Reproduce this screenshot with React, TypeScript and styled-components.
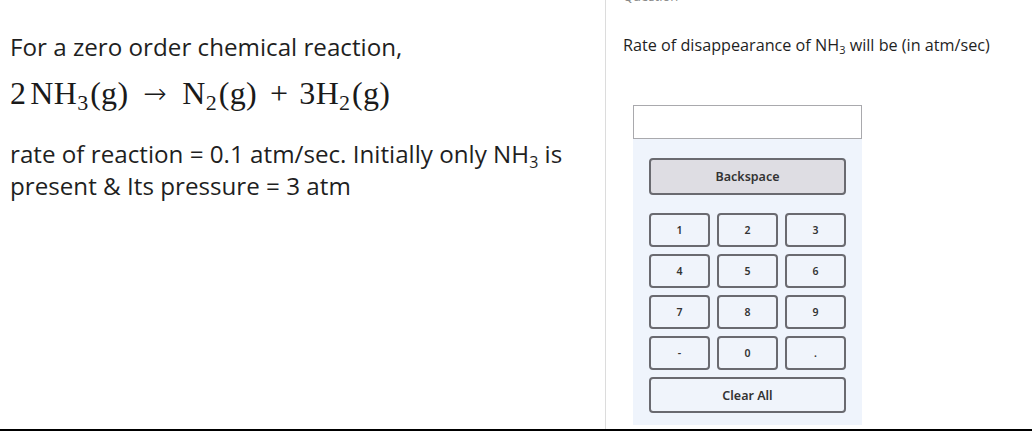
import React, { useState } from 'react';
import styled, { createGlobalStyle } from 'styled-components';

const keys = ['1', '2', '3', '4', '5', '6', '7', '8', '9', '-', '0', '.'];

const App = () => {
  const [value, setValue] = useState('');

  const press = (key: string) => setValue(old => old + key);

  return (
    <>
      <GlobalStyle />
      <Page>
        <LeftPane>
          <Para>For a zero order chemical reaction,</Para>
          <Equation>
            2<Gap w={4} />NH<sub>3</sub><Gap w={2} />(g)<Gap w={15} />
            <Arrow>→</Arrow>
            <Gap w={15} />N<sub>2</sub><Gap w={2} />(g)<Gap w={13} />+<Gap w={11} />3H<sub>2</sub>
            <Gap w={2} />(g)
          </Equation>
          <Para>
            rate of reaction = 0.1 atm/sec. Initially only NH<sub>3</sub> is present &amp; Its pressure = 3 atm
          </Para>
        </LeftPane>
        <RightPane>
          <Peek>Question</Peek>
          <Prompt>
            Rate of disappearance of NH<sub>3</sub> will be (in atm/sec)
          </Prompt>
          <Answer value={value} readOnly />
          <Keypad>
            <WideKey $grey onClick={() => setValue(old => old.slice(0, -1))}>
              Backspace
            </WideKey>
            <KeyGrid>
              {keys.map(key => (
                <Key key={key} onClick={() => press(key)}>
                  {key}
                </Key>
              ))}
            </KeyGrid>
            <WideKey onClick={() => setValue('')}>Clear All</WideKey>
          </Keypad>
        </RightPane>
      </Page>
    </>
  );
};

export default App;

const GlobalStyle = createGlobalStyle`
  html, body {
    margin: 0;
    background: #fff;
    font-family: 'Open Sans', 'Noto Sans', sans-serif;
    color: #222;
  }
`;

const Page = styled.div`
  display: flex;
  height: 431px;
  box-sizing: border-box;
  border-bottom: 2px solid #000;
  overflow: hidden;
`;

const LeftPane = styled.div`
  width: 606px;
  box-sizing: border-box;
  padding: 31px 10px 0;
  border-right: 1px solid #dcdcdc;
`;

const Para = styled.p`
  margin: 0;
  font-size: 24.2px;
  line-height: 32px;
  color: #1f1f1f;

  & > sub {
    font-size: 16px;
    line-height: 0;
    vertical-align: -5px;
  }
`;

const Equation = styled.div`
  margin: 13px 0 27px;
  font-family: 'Liberation Serif', 'DejaVu Serif', serif;
  font-size: 32px;
  line-height: 34px;
  letter-spacing: 0.3px;
  color: #1a1a1a;
  white-space: nowrap;

  & > sub {
    font-size: 22px;
    line-height: 0;
    vertical-align: -6px;
    letter-spacing: 0;
  }
`;

const Arrow = styled.span`
  display: inline-block;
  width: 24px;
  font-family: 'DejaVu Sans', sans-serif;
  font-size: 28px;
  font-weight: 200;
  letter-spacing: 0;
  vertical-align: 1px;
`;

const Gap = styled.span<{ w?: number }>`
  display: inline-block;
  width: ${p => p.w ?? 6}px;
`;

const RightPane = styled.div`
  flex: 1;
  padding-left: 17px;
`;

const Peek = styled.div`
  margin-top: -12px;
  height: 16px;
  font-size: 13px;
  line-height: 16px;
  color: #888;
`;

const Prompt = styled.p`
  margin: 30px 0 0;
  font-size: 16.2px;
  line-height: 22px;
  color: #1f1f1f;

  & > sub {
    font-size: 11px;
    line-height: 0;
    vertical-align: -3px;
  }
`;

const Answer = styled.input`
  display: block;
  margin: 49px 0 0 10px;
  width: 229px;
  height: 34px;
  box-sizing: border-box;
  border: 1.5px solid #a9a9ad;
  background: #fff;
  outline: none;
  font-size: 14px;
`;

const Keypad = styled.div`
  margin-left: 10px;
  width: 229px;
  box-sizing: border-box;
  padding: 19px 16px 12px;
  background: #eff4fc;
  display: flex;
  flex-direction: column;
  gap: 20px;
`;

const KeyGrid = styled.div`
  display: grid;
  grid-template-columns: repeat(3, 1fr);
  gap: 7px;
  margin-top: -2px;
  margin-bottom: -13px;
`;

const Key = styled.button`
  height: 34px;
  padding: 0;
  border: 2px solid #6a6a70;
  border-radius: 4px;
  background: #f0f4fb;
  font-family: 'Noto Sans', 'Open Sans', sans-serif;
  font-size: 10.5px;
  font-weight: 600;
  color: #333;
  cursor: pointer;
`;

const WideKey = styled(Key)<{ $grey?: boolean }>`
  height: ${p => (p.$grey ? 37 : 36)}px;
  background: ${p => (p.$grey ? '#dedde3' : '#f0f4fb')};
  font-size: 12.5px;
`;
